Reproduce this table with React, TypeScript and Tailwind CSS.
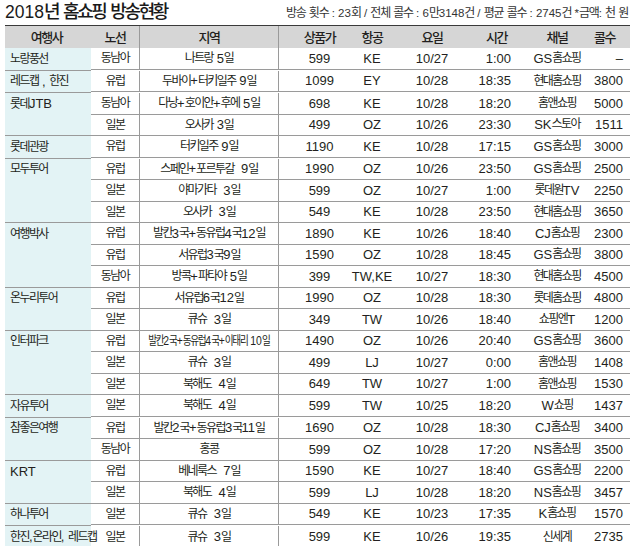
import React from "react";

const KR = /([가-힣]+)/;

function K({ s, kc = "text-[12px] tracking-[-1.6px]" }: { s: string; kc?: string }) {
  const parts = s.split(KR).filter((p) => p.length > 0);
  return (
    <>
      {parts.map((p, i) =>
        /[가-힣]/.test(p) ? (
          <span key={i} className={kc}>
            {p}
          </span>
        ) : (
          <span key={i}>{p}</span>
        )
      )}
    </>
  );
}

type Row = {
  route: string;
  region: string;
  price: string;
  air: string;
  day: string;
  time: string;
  ch: string;
  calls: string;
  squeeze?: boolean;
};

type Group = { agency: string; rows: Row[] };

const r = (
  route: string,
  region: string,
  price: string,
  air: string,
  day: string,
  time: string,
  ch: string,
  calls: string,
  squeeze = false
): Row => ({ route, region, price, air, day, time, ch, calls, squeeze });

const groups: Group[] = [
  { agency: "노랑풍선", rows: [r("동남아", "나트랑 5일", "599", "KE", "10/27", "1:00", "GS홈쇼핑", "–")] },
  { agency: "레드캡 , 한진", rows: [r("유럽", "두바이+터키일주 9일", "1099", "EY", "10/28", "18:35", "현대홈쇼핑", "3800")] },
  {
    agency: "롯데JTB",
    rows: [
      r("동남아", "다낭+호이안+후에 5일", "698", "KE", "10/28", "18:20", "홈앤쇼핑", "5000"),
      r("일본", "오사카 3일", "499", "OZ", "10/26", "23:30", "SK스토아", "1511"),
    ],
  },
  { agency: "롯데관광", rows: [r("유럽", "터키일주 9일", "1190", "KE", "10/28", "17:15", "GS홈쇼핑", "3000")] },
  {
    agency: "모두투어",
    rows: [
      r("유럽", "스페인+포르투갈  9일", "1990", "OZ", "10/26", "23:50", "GS홈쇼핑", "2500"),
      r("일본", "야마가타  3일", "599", "OZ", "10/27", "1:00", "롯데원TV", "2250"),
      r("일본", "오사카  3일", "549", "KE", "10/28", "23:50", "현대홈쇼핑", "3650"),
    ],
  },
  {
    agency: "여행박사",
    rows: [
      r("유럽", "발칸3국+동유럽4국12일", "1890", "KE", "10/26", "18:40", "CJ홈쇼핑", "2300"),
      r("유럽", "서유럽3국9일", "1590", "OZ", "10/28", "18:45", "GS홈쇼핑", "3800"),
      r("동남아", "방콕+파타야 5일", "399", "TW,KE", "10/27", "18:30", "현대홈쇼핑", "4500"),
    ],
  },
  {
    agency: "온누리투어",
    rows: [
      r("유럽", "서유럽6국12일", "1990", "OZ", "10/28", "18:30", "롯데홈쇼핑", "4800"),
      r("일본", "큐슈  3일", "349", "TW", "10/26", "18:40", "쇼핑엔T", "1200"),
    ],
  },
  {
    agency: "인터파크",
    rows: [
      r("유럽", "발칸2국+동유럽4국+이태리 10일", "1490", "OZ", "10/26", "20:40", "GS홈쇼핑", "3600", true),
      r("일본", "큐슈  3일", "499", "LJ", "10/27", "0:00", "홈앤쇼핑", "1408"),
      r("일본", "북해도  4일", "649", "TW", "10/27", "1:00", "홈앤쇼핑", "1530"),
    ],
  },
  { agency: "자유투어", rows: [r("일본", "북해도  4일", "599", "TW", "10/25", "18:20", "W쇼핑", "1437")] },
  {
    agency: "참좋은여행",
    rows: [
      r("유럽", "발칸2국+동유럽3국11일", "1690", "OZ", "10/28", "18:30", "CJ홈쇼핑", "3400"),
      r("동남아", "홍콩", "599", "OZ", "10/28", "17:20", "NS홈쇼핑", "3500"),
    ],
  },
  {
    agency: "KRT",
    rows: [
      r("유럽", "베네룩스  7일", "1590", "KE", "10/27", "18:40", "GS홈쇼핑", "2200"),
      r("일본", "북해도  4일", "599", "LJ", "10/28", "18:20", "NS홈쇼핑", "3457"),
    ],
  },
  { agency: "하나투어", rows: [r("일본", "큐슈  3일", "549", "KE", "10/23", "17:35", "K홈쇼핑", "1570")] },
  { agency: "한진,온라인, 레드캡", rows: [r("일본", "큐슈  3일", "599", "KE", "10/26", "19:35", "신세계", "2735")] },
];

function DataRow({ row, last }: { row: Row; last: boolean }) {
  return (
    <div className={`flex h-[21.5px] items-center whitespace-pre ${last ? "" : "border-b border-[#9a9a9a]"}`}>
      <div className="flex h-full w-[49px] shrink-0 items-center justify-center border-r border-[#9a9a9a]">
        <K s={row.route} />
      </div>
      <div className="flex h-full w-[139px] shrink-0 items-center justify-center border-r border-[#9a9a9a]">
        {row.squeeze ? (
          <span className="inline-block scale-x-[0.8]">
            <K s={row.region} />
          </span>
        ) : (
          <K s={row.region} />
        )}
      </div>
      <div className="flex w-[81px] shrink-0 justify-center">{row.price}</div>
      <div className="flex w-[24px] shrink-0 justify-center">{row.air}</div>
      <div className="flex w-[96px] shrink-0 justify-center">{row.day}</div>
      <div className="flex w-[33px] shrink-0 justify-end pr-[2px]">{row.time}</div>
      <div className="flex w-[88px] shrink-0 justify-center">
        <K s={row.ch} />
      </div>
      <div className="flex w-[29px] shrink-0 justify-end pr-[7px]">{row.calls}</div>
    </div>
  );
}

export default function App() {
  const hk = "text-[13px] tracking-[-1.5px]";
  return (
    <div className="h-[546px] w-[633px] overflow-hidden bg-white font-['Liberation_Sans','Noto_Sans_CJK_KR',sans-serif] text-[13px] leading-none text-[#231f20]">
      <div className="flex h-[25px] items-center justify-between pl-[5px] pr-[5px]">
        <div className="whitespace-pre text-[17.5px] text-[#1a1a1a]">
          <K s="2018년 홈쇼핑 방송현황" kc="text-[18px] tracking-[-2.4px] font-medium" />
        </div>
        <div className="whitespace-pre pt-[2px] text-[11.5px] text-[#333]">
          <K s="방송 횟수 : 23회 / 전체 콜수 : 6만3148건 / 평균 콜수 : 2745건 *금액: 천 원" kc="text-[12px] tracking-[-1.2px]" />
        </div>
      </div>
      <div className="ml-[5px] w-[625px] border-t border-b-2 border-t-[#3a3a3a] border-b-[#222]">
        <div className="flex h-[22px] items-center whitespace-nowrap bg-[#d6d6d6] font-medium">
          <div className="flex w-[86px] shrink-0 justify-center pr-[3px]">
            <K s="여행사" kc={hk} />
          </div>
          <div className="flex h-full w-[49px] shrink-0 items-center justify-center border-r border-[#9a9a9a]">
            <K s="노선" kc={hk} />
          </div>
          <div className="flex h-full w-[139px] shrink-0 items-center justify-center border-r border-[#9a9a9a]">
            <K s="지역" kc={hk} />
          </div>
          <div className="flex w-[81px] shrink-0 justify-center">
            <K s="상품가" kc={hk} />
          </div>
          <div className="flex w-[24px] shrink-0 justify-center">
            <K s="항공" kc={hk} />
          </div>
          <div className="flex w-[96px] shrink-0 justify-center">
            <K s="요일" kc={hk} />
          </div>
          <div className="flex w-[33px] shrink-0 justify-center">
            <K s="시간" kc={hk} />
          </div>
          <div className="flex w-[88px] shrink-0 justify-center">
            <K s="채널" kc={hk} />
          </div>
          <div className="flex w-[29px] shrink-0 justify-end pr-[15px]">
            <K s="콜수" kc={hk} />
          </div>
        </div>
        {groups.map((g, gi) => {
          const lastGroup = gi === groups.length - 1;
          return (
            <div key={gi} className="flex">
              <div
                className={`w-[86px] shrink-0 bg-[#e3f3f5] pl-[5px] ${lastGroup ? "" : "border-b border-[#9a9a9a]"}`}
              >
                <div className="flex h-[21.5px] items-center whitespace-pre">
                  <K s={g.agency} />
                </div>
              </div>
              <div className="flex w-[539px] shrink-0 flex-col">
                {g.rows.map((row, ri) => (
                  <DataRow key={ri} row={row} last={lastGroup && ri === g.rows.length - 1} />
                ))}
              </div>
            </div>
          );
        })}
      </div>
    </div>
  );
}
